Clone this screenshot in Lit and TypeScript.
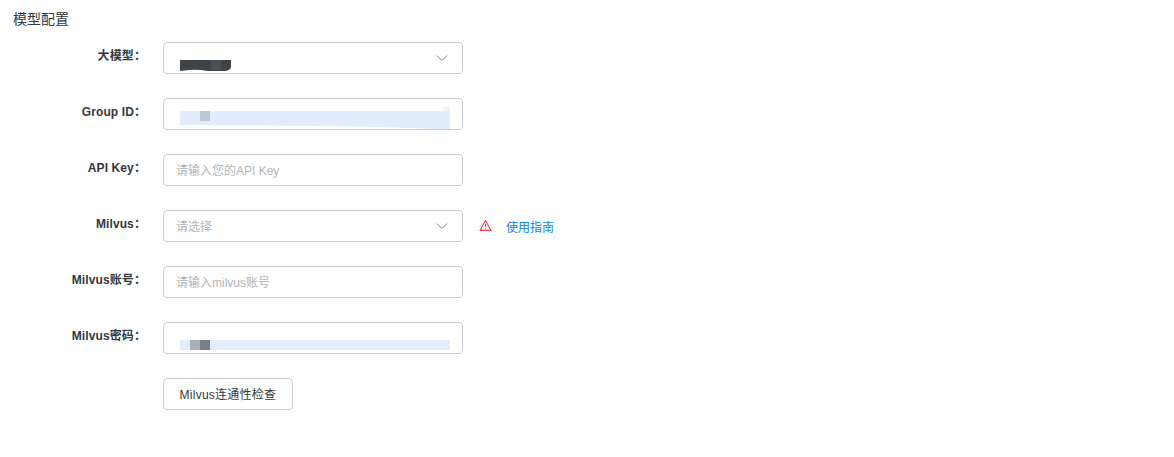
import { LitElement, html, css, svg } from "lit";
import { customElement } from "lit/decorators.js";

const chevron = html`<svg class="chev" width="12" height="12" viewBox="0 0 12 12" fill="none"><path d="M1 3.6 L6 8.6 L11 3.6" stroke="#6f757b" stroke-width="1"/></svg>`;

@customElement("app-root")
export class AppRoot extends LitElement {
  static styles = css`
    :host {
      display: block;
      width: 1174px;
      height: 457px;
      background: #fff;
      font-family: "Liberation Sans", "Noto Sans CJK SC", sans-serif;
      color: #33383d;
      overflow: hidden;
    }
    .title {
      font-size: 14px;
      line-height: 20px;
      padding: 9px 0 0 13px;
      color: #33383d;
    }
    .form {
      display: flex;
      flex-direction: column;
      gap: 24px;
      padding-top: 13px;
    }
    .row {
      display: flex;
      align-items: flex-start;
      height: 32px;
    }
    .label {
      width: 146px;
      flex: none;
      text-align: right;
      font-size: 12px;
      font-weight: 700;
      letter-spacing: 0.1px;
      line-height: 28px;
      color: #33383d;
      white-space: nowrap;
    }
    .field {
      position: relative;
      box-sizing: border-box;
      margin-left: 17px;
      width: 300px;
      height: 32px;
      border: 1px solid #c9cdd2;
      border-radius: 4px;
      padding: 0 12px 2px 12px;
      display: flex;
      align-items: center;
      justify-content: space-between;
      font-size: 12px;
      color: #b0b4b9;
      background: #fff;
    }
    .chev {
      margin-right: 2px;
      margin-top: 1px;
    }
    .blur {
      position: absolute;
      left: 0;
      top: 0;
    }
    .warn {
      margin: 9px 0 0 16px;
      display: block;
    }
    .link {
      margin-left: 14px;
      font-size: 12px;
      line-height: 34px;
      height: 32px;
      color: #0a84e0;
      white-space: nowrap;
      padding-top: 1px;
      box-sizing: border-box;
    }
    .btn-row {
      padding-left: 163px;
    }
    .btn {
      box-sizing: border-box;
      width: 130px;
      height: 32px;
      padding: 0 0 2px;
      border: 1px solid #c9cdd2;
      border-radius: 4px;
      background: #fff;
      font: inherit;
      font-size: 12px;
      letter-spacing: 0.25px;
      color: #33383d;
    }
  `;

  render() {
    return html`
      <div class="title">模型配置</div>
      <div class="form">
        <div class="row">
          <div class="label">大模型：</div>
          <div class="field">
            <svg class="blur" width="298" height="30" viewBox="0 0 298 30">
              ${svg`<path d="M16 17 H67 V24 Q66 28 60 28 L44 28 Q33 26 25 27 L16 28 Z" fill="#3d4347"/>
              <rect x="47" y="17" width="10" height="10" fill="#4a5053"/>`}
            </svg>
            <span></span>${chevron}
          </div>
        </div>
        <div class="row">
          <div class="label">Group ID：</div>
          <div class="field">
            <svg class="blur" width="298" height="30" viewBox="0 0 298 30">
              ${svg`<path d="M16 12 H286 V30 H270 Q200 27 150 27 L16 26 Z" fill="#e1edfd"/>
              <path d="M279 8 L286 7 V12 H279 Z" fill="#edf4fc"/>
              <rect x="36" y="12" width="10" height="10" fill="#c0c6d2"/>`}
            </svg>
          </div>
        </div>
        <div class="row">
          <div class="label">API Key：</div>
          <div class="field">请输入您的API Key</div>
        </div>
        <div class="row">
          <div class="label">Milvus：</div>
          <div class="field"><span>请选择</span>${chevron}</div>
          <svg class="warn" width="13" height="13" viewBox="0 0 13 13" fill="none">
            <path d="M6.5 1.4 L12 11.4 H1 Z" stroke="#f5383b" stroke-width="1.1" stroke-linejoin="round"/>
            <path d="M6.5 4.8 V8.2 M6.5 9 V10" stroke="#f5383b" stroke-width="1"/>
          </svg>
          <a class="link">使用指南</a>
        </div>
        <div class="row">
          <div class="label">Milvus账号：</div>
          <div class="field">请输入milvus账号</div>
        </div>
        <div class="row">
          <div class="label">Milvus密码：</div>
          <div class="field">
            <svg class="blur" width="298" height="30" viewBox="0 0 298 30">
              ${svg`<rect x="16" y="17" width="270" height="10" rx="1" fill="#e1edfd"/>
              <rect x="26" y="17" width="10" height="10" fill="#a9aebb"/>
              <rect x="36" y="17" width="10" height="10" fill="#797f88"/>`}
            </svg>
          </div>
        </div>
        <div class="btn-row">
          <button class="btn">Milvus连通性检查</button>
        </div>
      </div>
    `;
  }
}
